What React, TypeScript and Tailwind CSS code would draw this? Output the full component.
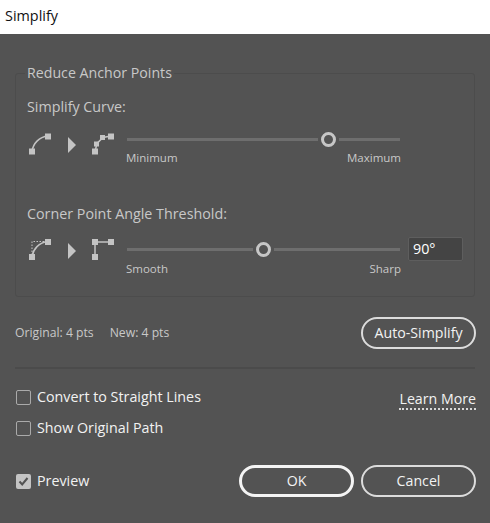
const font = { fontFamily: '"Open Sans", "Noto Sans", sans-serif' }

function CurveIcon({ dy = 0 }: { dy?: number }) {
  return (
    <svg width="26" height="24" viewBox={`0 ${-dy} 26 24`} fill="none" className="shrink-0 overflow-visible">
      <path d="M5 20 C6 12 12 5.5 21 4.5" stroke="#c4c4c4" strokeWidth="1.5" />
      <rect x="2" y="17" width="6" height="6" fill="#c4c4c4" />
      <rect x="18" y="2" width="6" height="6" fill="#c4c4c4" />
    </svg>
  )
}

function CurveCornerIcon() {
  return (
    <svg width="26" height="24" viewBox="0 0 26 24" fill="none" className="shrink-0">
      <path d="M5 18 V4.5 H18" stroke="#c4c4c4" strokeWidth="1" strokeDasharray="1.5 1.5" />
      <path d="M5 20 C6 12 12 5.5 21 4.5" stroke="#c4c4c4" strokeWidth="1.5" />
      <rect x="2" y="17" width="6" height="6" fill="#c4c4c4" />
      <rect x="18" y="2" width="6" height="6" fill="#c4c4c4" />
    </svg>
  )
}

function Segments({ dy = 0 }: { dy?: number }) {
  return (
    <svg width="26" height="24" viewBox={`0 ${-dy} 26 24`} fill="none" className="shrink-0 overflow-visible">
      <path d="M5 20 L7 12 L13 6 L21 4.5" stroke="#c4c4c4" strokeWidth="1.5" />
      <rect x="2" y="17" width="6" height="6" fill="#c4c4c4" />
      <rect x="4" y="10" width="5" height="5" fill="#c4c4c4" />
      <rect x="10" y="3.5" width="5" height="5" fill="#c4c4c4" />
      <rect x="18" y="2" width="6" height="6" fill="#c4c4c4" />
    </svg>
  )
}

function CornerIcon() {
  return (
    <svg width="26" height="24" viewBox="0 0 26 24" fill="none" className="shrink-0">
      <path d="M5 20 V5 H21" stroke="#c4c4c4" strokeWidth="1.5" />
      <rect x="2" y="17" width="6" height="6" fill="#c4c4c4" />
      <rect x="2" y="2" width="6" height="6" fill="#c4c4c4" />
      <rect x="18" y="2" width="6" height="6" fill="#c4c4c4" />
    </svg>
  )
}

function Arrow({ dy }: { dy: number }) {
  return (
    <svg width="8" height="16" viewBox={`0 ${-dy} 8 16`} className="shrink-0 overflow-visible">
      <path d="M0 0 L8 8 L0 16 Z" fill="#c4c4c4" />
    </svg>
  )
}

function Slider({ left, right }: { left: number; right: number }) {
  return (
    <div className="flex w-[273px] items-center gap-[3px]">
      <div className="h-[3px] bg-[#6e6e6e]" style={{ width: left }} />
      <div className="h-[15px] w-[15px] shrink-0 rounded-full border-[3px] border-[#c6c6c6]" />
      <div className="h-[3px] bg-[#6e6e6e]" style={{ width: right }} />
    </div>
  )
}

function Check({ label, checked }: { label: string; checked?: boolean }) {
  return (
    <label className="flex items-center gap-[6px] text-[14.3px] leading-[20px] text-[#f2f2f2]">
      {checked ? (
        <span className="flex h-[15px] w-[15px] items-center justify-center rounded-[2px] bg-[#c4c4c4]">
          <svg width="11" height="11" viewBox="0 0 11 11" fill="none">
            <path d="M1.5 5.5 L4.2 8.5 L9.5 2" stroke="#535353" strokeWidth="2" />
          </svg>
        </span>
      ) : (
        <span className="h-[15px] w-[15px] rounded-[2px] border border-[#aaaaaa]" />
      )}
      {label}
    </label>
  )
}

export default function App() {
  return (
    <div className="flex h-[523px] w-[490px] flex-col" style={font}>
      <div className="flex h-[34px] items-center bg-white pb-[3px] pl-[5px] text-[14.4px] text-[#111111]">Simplify</div>
      <div className="flex flex-1 flex-col bg-[#535353] px-[15px] text-[#c8c8c8]">
        <fieldset className="mt-[29px] h-[234px] w-[460px] rounded-[3px] border border-[#4c4c4c] px-[11px]">
          <legend className="-ml-[2px] px-[2px] text-[14.2px] leading-[20px]">Reduce Anchor Points</legend>
          <div className="mt-[14px] text-[14.3px] leading-[20px]">Simplify Curve:</div>
          <div className="mt-[10px] flex items-center">
            <CurveIcon dy={4.5} />
            <div className="ml-[15px]"><Arrow dy={6} /></div>
            <div className="ml-[14px]"><Segments dy={4.5} /></div>
            <div className="ml-[11px]"><Slider left={191} right={61} /></div>
          </div>
          <div className="-mt-[1px] ml-[99px] flex w-[275px] justify-between text-[11.5px] leading-[16px]">
            <span>Minimum</span>
            <span>Maximum</span>
          </div>
          <div className="mt-[38px] text-[14.3px] leading-[20px]">Corner Point Angle Threshold:</div>
          <div className="mt-[13px] flex items-center">
            <CurveCornerIcon />
            <div className="ml-[15px]"><Arrow dy={2} /></div>
            <div className="ml-[14px]"><CornerIcon /></div>
            <div className="ml-[11px]"><Slider left={126} right={126} /></div>
            <div className="ml-[8px] flex h-[24px] w-[55px] items-center rounded-[2px] border border-[#5e5e5e] bg-[#444444] pl-[4px] text-[14.3px] text-white">90°</div>
          </div>
          <div className="ml-[99px] flex w-[275px] justify-between text-[11.5px] leading-[16px]">
            <span>Smooth</span>
            <span>Sharp</span>
          </div>
        </fieldset>

        <div className="-mr-[1px] mt-[20px] flex items-center justify-between">
          <div className="flex gap-[16px] text-[12.2px]">
            <span>Original: 4 pts</span>
            <span>New: 4 pts</span>
          </div>
          <button className="h-[32px] w-[115px] rounded-full border-2 border-[#dcdcdc] text-[14.2px] text-[#f2f2f2]">Auto-Simplify</button>
        </div>

        <div className="mt-[18px] h-[2px] w-[460px] bg-[#4b4b4b]" />

        <div className="-mr-[1px] mt-[18px] flex items-start justify-between pl-[1px]">
          <div className="flex flex-col gap-[11px]">
            <Check label="Convert to Straight Lines" />
            <Check label="Show Original Path" />
          </div>
          <span className="mt-[3px] border-b-2 border-dotted border-[#d8d8d8] text-[14.2px] leading-[18px] text-[#f2f2f2]">Learn More</span>
        </div>

        <div className="-mr-[1px] mt-[27px] flex items-center justify-between pl-[1px]">
          <Check label="Preview" checked />
          <div className="flex gap-[7px]">
            <button className="h-[32px] w-[115px] rounded-full border-[3px] border-[#f4f4f4] text-[14.2px] text-[#f2f2f2]">OK</button>
            <button className="h-[32px] w-[115px] rounded-full border-2 border-[#dcdcdc] text-[14.2px] text-[#f2f2f2]">Cancel</button>
          </div>
        </div>
      </div>
    </div>
  )
}
